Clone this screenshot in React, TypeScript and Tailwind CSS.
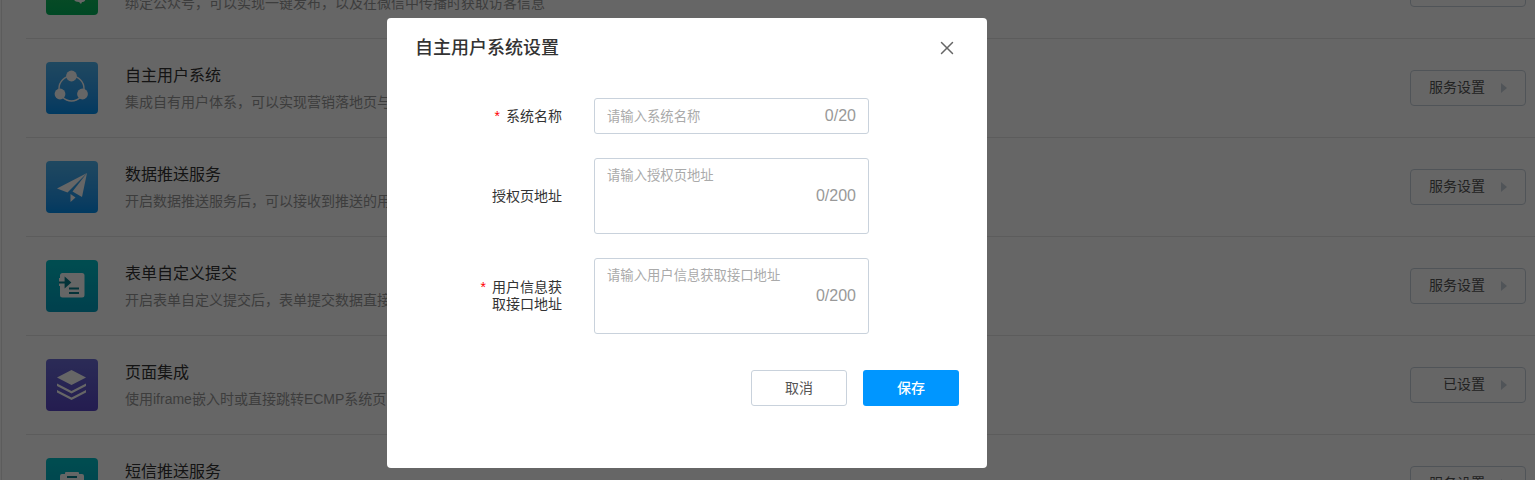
import { ReactNode } from "react";
import { X } from "lucide-react";

const WechatIcon = () => (
  <svg viewBox="0 0 52 52" className="w-full h-full" fill="#fff">
    <path d="M29 33c4-1 9-1 10 2 1 3-1 4-3 4l-1 2-2-2c-3 0-5-1-5-3 0-1 0-2 1-3z" />
  </svg>
);

const NetworkIcon = () => (
  <svg viewBox="0 0 52 52" className="w-full h-full">
    <circle cx="25.5" cy="26.5" r="12.5" fill="none" stroke="#fff" strokeWidth="1.4" />
    <circle cx="25.5" cy="14" r="5.4" fill="#fff" />
    <circle cx="14" cy="32" r="5.4" fill="#fff" />
    <circle cx="36.5" cy="32" r="5.4" fill="#fff" />
  </svg>
);

const PlaneIcon = () => (
  <svg viewBox="0 0 52 52" className="w-full h-full" fill="#fff">
    <path d="M41 12 11 27.500l10.500 4z" />
    <path d="M41 12 26.500 30.500 36 36z" />
    <path d="M24.500 33v8l5-4.500z" />
  </svg>
);

const FormIcon = () => (
  <svg viewBox="0 0 52 52" className="w-full h-full">
    <path
      d="M17 13h19a2.500 2.500 0 0 1 2.500 2.500V35a2.500 2.500 0 0 1-2.500 2.500H16.500A2.500 2.500 0 0 1 14 35V26h-1v-8h1v-2.500A2.500 2.500 0 0 1 17 13z"
      fill="#fff"
    />
    <path d="M13 22.500h9M19.500 18.500l4.500 4-4.500 4z" stroke="#0a7f8e" strokeWidth="1.800" fill="#0a7f8e" />
    <path d="M23 28.500h10M23 33h10" stroke="#0a7f8e" strokeWidth="2" />
  </svg>
);

const LayersIcon = () => (
  <svg viewBox="0 0 52 52" className="w-full h-full" fill="#fff">
    <path d="M25.500 11 40 18.500 25.500 26 11 18.500z" />
    <path d="M11 24.500l14.500 7.500L40 24.500v2.500l-14.500 7.500L11 27z" />
    <path d="M11 31l14.500 7.500L40 31v2.500L25.500 41 11 33.500z" />
  </svg>
);

const ClipboardIcon = () => (
  <svg viewBox="0 0 52 52" className="w-full h-full" fill="#fff">
    <path d="M20 14h12a1 1 0 0 1 1 1v1h3a2 2 0 0 1 2 2v20a2 2 0 0 1-2 2H16a2 2 0 0 1-2-2V18a2 2 0 0 1 2-2h3v-1a1 1 0 0 1 1-1z" />
    <path d="M21 18h10v2H21z" fill="#0a7f8e" />
  </svg>
);

type Service = {
  title: string;
  desc: string;
  action: string;
  gradient: string;
  icon: ReactNode;
};

const services: Service[] = [
  {
    title: "公众号绑定",
    desc: "绑定公众号，可以实现一键发布，以及在微信中传播时获取访客信息",
    action: "服务设置",
    gradient: "bg-gradient-to-b from-[#24c26a] to-[#00b45a]",
    icon: <WechatIcon />,
  },
  {
    title: "自主用户系统",
    desc: "集成自有用户体系，可以实现营销落地页与自有用户系统的打通",
    action: "服务设置",
    gradient: "bg-gradient-to-b from-[#4fb4f0] to-[#0090f0]",
    icon: <NetworkIcon />,
  },
  {
    title: "数据推送服务",
    desc: "开启数据推送服务后，可以接收到推送的用户行为数据",
    action: "服务设置",
    gradient: "bg-gradient-to-b from-[#4fb4f0] to-[#0090f0]",
    icon: <PlaneIcon />,
  },
  {
    title: "表单自定义提交",
    desc: "开启表单自定义提交后，表单提交数据直接发送到指定地址",
    action: "服务设置",
    gradient: "bg-gradient-to-b from-[#00c0c8] to-[#00a0c0]",
    icon: <FormIcon />,
  },
  {
    title: "页面集成",
    desc: "使用iframe嵌入时或直接跳转ECMP系统页面时可以免登录",
    action: "已设置",
    gradient: "bg-gradient-to-b from-[#6c6cd8] to-[#5a48c8]",
    icon: <LayersIcon />,
  },
  {
    title: "短信推送服务",
    desc: "开启短信推送服务后，可以向用户发送短信通知",
    action: "服务设置",
    gradient: "bg-gradient-to-b from-[#00c0c8] to-[#00a0c0]",
    icon: <ClipboardIcon />,
  },
];

const ServiceRow = ({ service }: { service: Service }) => (
  <div className="flex items-center shrink-0 h-[99px] pl-5 pr-[9px] border-b border-[#e6e6e6]">
    <div className={`w-[52px] h-[52px] shrink-0 rounded ${service.gradient}`}>{service.icon}</div>
    <div className="ml-[27px] flex-1">
      <div className="text-base leading-[22px] text-[#333]">{service.title}</div>
      <div className="mt-[5px] text-sm leading-5 text-[#999]">{service.desc}</div>
    </div>
    <button className="relative w-[116px] h-9 pb-[2px] border border-[#c9d2dc] rounded text-sm text-[#555] text-right pr-[40px]">
      {service.action}
      <span className="absolute right-[18px] top-[12px] border-y-[5px] border-y-transparent border-l-[6px] border-l-[#c9d2dc]" />
    </button>
  </div>
);

const labelRow = "flex items-center justify-end w-[147px] shrink-0 text-sm leading-[17px] text-[#333]";
const fieldBorder = "border border-[#c9d2dc] rounded-[3px] outline-none placeholder:text-[#aaa] text-[13.33px]";
const counter = "absolute right-[13px] text-base leading-5 text-[#999]";

const Star = () => <span className="self-start mr-[6px] text-sm leading-[17px] text-[#f00]">*</span>;

const SettingsModal = () => (
  <div className="absolute inset-0 bg-black/60 flex justify-center items-start pt-[18px] pr-[161px]">
    <div className="w-[600px] h-[450px] bg-white rounded flex flex-col">
      <div className="flex items-center justify-between h-[59px] pl-7 pr-[29px] pt-[1px]">
        <h2 className="text-lg font-medium text-[#333]">自主用户系统设置</h2>
        <X className="w-[22px] h-[22px] text-[#666]" strokeWidth={1.6} />
      </div>

      <div className="flex flex-col gap-6 pl-7 mt-[21px]">
        <div className="flex items-center gap-8">
          <div className={labelRow}>
            <Star />
            系统名称
          </div>
          <div className="relative flex items-center w-[275px]">
            <input placeholder="请输入系统名称" className={`w-full h-9 px-3 ${fieldBorder}`} />
            <span className={counter}>0/20</span>
          </div>
        </div>

        <div className="flex items-center gap-8">
          <div className={labelRow}>授权页地址</div>
          <div className="relative flex items-center w-[275px]">
            <textarea
              placeholder="请输入授权页地址"
              className={`w-full h-[76px] px-3 py-[7px] resize-none block ${fieldBorder}`}
            />
            <span className={counter}>0/200</span>
          </div>
        </div>

        <div className="flex items-center gap-8">
          <div className={labelRow}>
            <Star />
            <span className="w-[70px]">用户信息获取接口地址</span>
          </div>
          <div className="relative flex items-center w-[275px]">
            <textarea
              placeholder="请输入用户信息获取接口地址"
              className={`w-full h-[76px] px-3 py-[7px] resize-none block ${fieldBorder}`}
            />
            <span className={counter}>0/200</span>
          </div>
        </div>
      </div>

      <div className="flex justify-end gap-4 mt-9 pr-7">
        <button className="w-24 h-9 border border-[#c9d2dc] rounded-[3px] text-sm text-[#555]">取消</button>
        <button className="w-24 h-9 bg-[#0096ff] rounded-[3px] text-sm font-medium text-white">保存</button>
      </div>
    </div>
  </div>
);

const App = () => {
  return (
    <div className="relative h-[480px] overflow-hidden bg-white font-['Liberation_Sans','Noto_Sans_CJK_SC',sans-serif]">
      <div className="flex flex-col h-full ml-px border-l border-[#e6e6e6] pl-[24px]">
        <div className="-mt-[60px]">
          {services.map((service) => (
            <ServiceRow key={service.title} service={service} />
          ))}
        </div>
      </div>
      <SettingsModal />
    </div>
  );
};

export default App;
